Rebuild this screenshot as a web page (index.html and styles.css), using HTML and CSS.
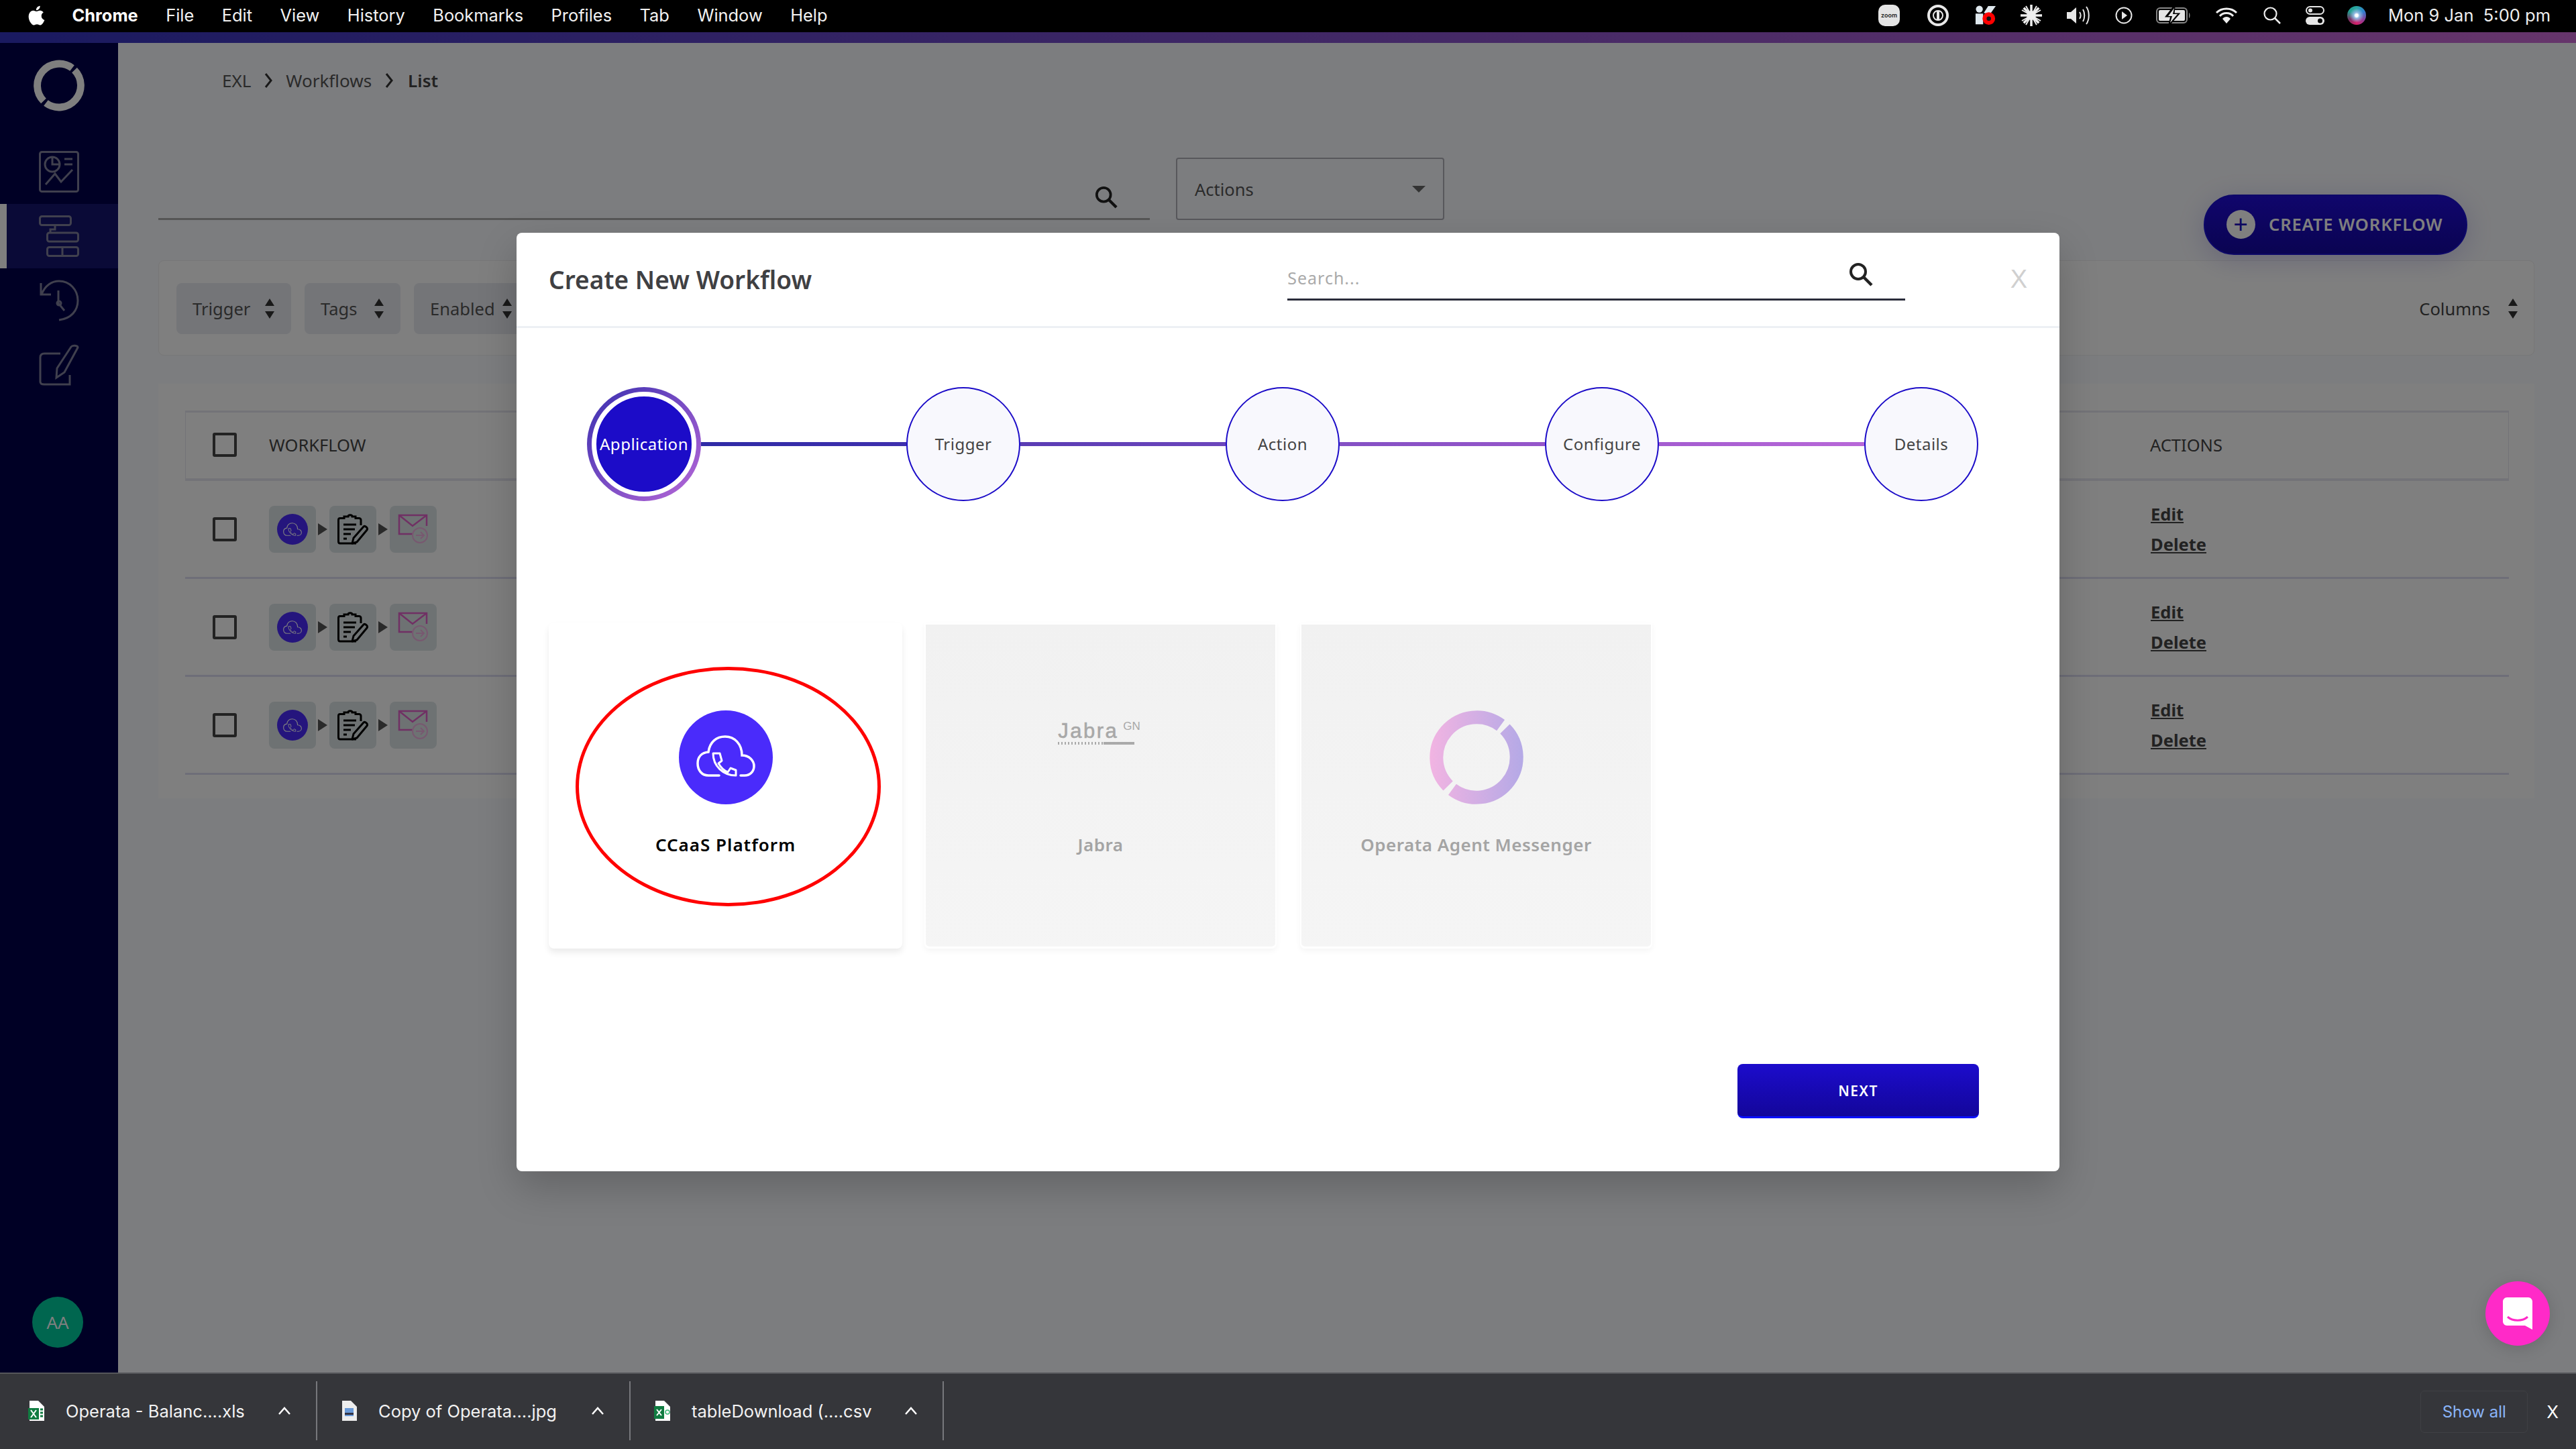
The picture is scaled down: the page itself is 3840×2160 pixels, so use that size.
FILE: index.html
```html
<!DOCTYPE html>
<html lang="en">

<head>
    <meta charset="UTF-8">
    <meta name="viewport" content="width=device-width, initial-scale=1.0">
    <title>Create New Workflow</title>
    <link rel="stylesheet" href="styles.css">
</head>

<body>
    <svg class="sprites" aria-hidden="true">
        <symbol id="icon-cloud" viewBox="0 0 88 62">
            <path d="M34 60H18C8 60 2 52 2 42C2 32 8 26 18 25C20 10 30 2 43 2C57 2 68 13 68 30C79 30 86 38 86 46C86 54 80 60 72 60H66" fill="none" stroke="currentColor" stroke-width="3.500" stroke-linecap="round" />
            <path d="M25 27H35L38 38L33 42C37 49 42 53 47 55L51 49L59 52V60C40 60 25 46 25 27Z" fill="none" stroke="currentColor" stroke-width="3" stroke-linejoin="round" />
        </symbol>
        <symbol id="icon-clip" viewBox="0 0 46 46">
            <path d="M28 44H4C2.500 44 1.500 43 1.500 41V9C1.500 7.500 2.500 6.500 4 6.500H10V4H16C16 1 22 1 22 4H27V6.500H32C34 6.500 35 8 35 9V17" fill="none" stroke="currentColor" stroke-width="3" />
            <path d="M9 16H28M9 23H26M9 30H20M9 37H14" fill="none" stroke="currentColor" stroke-width="3" />
            <path d="M22 44L24 36L39 19C41 17 46 21 44 24L29 42Z" fill="none" stroke="currentColor" stroke-width="3" stroke-linejoin="round" />
        </symbol>
        <symbol id="icon-mail" viewBox="0 0 46 46">
            <path d="M22 30H2V2H43V18" fill="none" stroke="#e060c8" stroke-width="2.500" />
            <path d="M2 2L22 18L43 2" fill="none" stroke="#e060c8" stroke-width="2.500" />
            <circle cx="33" cy="32" r="11" fill="none" stroke="#f0b0e0" stroke-width="2" />
            <path d="M27 32H39M34 27L39 32L34 37" fill="none" stroke="#f0b0e0" stroke-width="2" />
        </symbol>
        <symbol id="icon-search" viewBox="0 0 36 36">
            <circle cx="14" cy="14" r="11" fill="none" stroke="currentColor" stroke-width="4" />
            <path d="M22 22L34 34" stroke="currentColor" stroke-width="4.500" />
        </symbol>
        <symbol id="icon-sort" viewBox="0 0 16 32">
            <path d="M8 1L15 12H1Z M1 20H15L8 31Z" fill="currentColor" />
        </symbol>
        <symbol id="icon-caret" viewBox="0 0 20 12">
            <path d="M2 11L10 2L18 11" fill="none" stroke="#fff" stroke-width="2.500" />
        </symbol>
        <symbol id="icon-arrow" viewBox="0 0 14 18">
            <path d="M0 0L14 9L0 18Z" fill="#555" />
        </symbol>
    </svg>

    <header class="menubar">
        <nav class="menu-left">
            <svg class="apple" viewBox="0 0 24 28">
                <path d="M19.500 14.800C19.500 11.700 22 10.300 22.100 10.200C20.700 8.100 18.500 7.800 17.700 7.800C15.900 7.600 14.100 8.900 13.200 8.900C12.200 8.900 10.800 7.800 9.200 7.800C7.100 7.900 5.200 9 4.200 10.900C2 14.700 3.600 20.300 5.700 23.300C6.800 24.800 8 26.500 9.700 26.400C11.300 26.300 11.900 25.400 13.800 25.400C15.700 25.400 16.300 26.400 17.900 26.400C19.600 26.300 20.700 24.900 21.700 23.400C22.900 21.700 23.400 20 23.400 19.900C23.400 19.900 19.500 18.400 19.500 14.800ZM16.400 5.700C17.300 4.600 17.900 3.200 17.700 1.700C16.500 1.800 15 2.500 14.100 3.600C13.300 4.500 12.600 6 12.800 7.400C14.200 7.500 15.500 6.800 16.400 5.700Z" fill="#fff" />
            </svg>
            <strong>Chrome</strong>
            <span>File</span>
            <span>Edit</span>
            <span>View</span>
            <span>History</span>
            <span>Bookmarks</span>
            <span>Profiles</span>
            <span>Tab</span>
            <span>Window</span>
            <span>Help</span>
        </nav>
        <div class="menu-right">
            <span class="tray-zoom">zoom</span>
            <svg class="tray tray-1p" viewBox="0 0 32 32">
                <circle cx="16" cy="16" r="14" fill="none" stroke="#e8e8e8" stroke-width="4" />
                <circle cx="16" cy="16" r="7" fill="none" stroke="#e8e8e8" stroke-width="2" />
                <rect x="14" y="10" width="4" height="12" fill="#e8e8e8" />
            </svg>
            <svg class="tray" viewBox="0 0 34 32">
                <circle cx="7" cy="6" r="5.500" fill="#dfe8ee" />
                <path d="M1 13H13V30H1ZM14 12L21 1H33L24 14Z" fill="#dfe8ee" />
                <circle cx="22" cy="21" r="10" fill="#f00" />
                <circle cx="22" cy="21" r="3.500" fill="#111" />
            </svg>
            <svg class="tray" viewBox="0 0 32 32">
                <g stroke="#eee" stroke-width="3.500">
                    <path d="M16 0V32M0 16H32M4.700 4.700L27.300 27.300M27.300 4.700L4.700 27.300" />
                    <path d="M8 2L24 30M24 2L8 30M2 8L30 24M30 8L2 24" stroke-width="2" />
                </g>
                <circle cx="16" cy="16" r="7" fill="#eee" />
                <circle cx="16" cy="16" r="3" fill="#eee" />
            </svg>
            <svg class="tray tray-vol" viewBox="0 0 36 28">
                <path d="M1 9H7L15 2V26L7 19H1Z" fill="#e6e6e6" />
                <path d="M20 9C22 12 22 16 20 19M25 5C28 10 28 18 25 23M30 1C35 8 35 20 30 27" fill="none" stroke="#e6e6e6" stroke-width="2" />
            </svg>
            <svg class="tray tray-play" viewBox="0 0 26 26">
                <circle cx="13" cy="13" r="11.500" fill="none" stroke="#e6e6e6" stroke-width="2" />
                <path d="M10 7L18 13L10 19Z" fill="#e6e6e6" />
            </svg>
            <svg class="tray tray-batt" viewBox="0 0 52 26">
                <rect x="1" y="2" width="45" height="22" rx="5" fill="none" stroke="#888" stroke-width="2" />
                <rect x="4" y="5" width="39" height="16" rx="2" fill="#e6e6e6" />
                <path d="M27 0L16 14H23L20 26L33 11H26Z" fill="#000" stroke="#000" stroke-width="3" />
                <path d="M27 2L18 14H24L21 24L32 11H25Z" fill="#e6e6e6" />
                <path d="M49 9C51 10 51 16 49 17Z" fill="#888" />
            </svg>
            <svg class="tray tray-wifi" viewBox="0 0 34 26">
                <path d="M2 9C10 1 24 1 32 9M7 14C12 8 22 8 27 14" fill="none" stroke="#eee" stroke-width="3" />
                <path d="M11 18C14 14 20 14 23 18L17 25Z" fill="#eee" />
            </svg>
            <svg class="tray tray-find" viewBox="0 0 26 26">
                <circle cx="10.500" cy="10.500" r="9" fill="none" stroke="#eee" stroke-width="2.200" />
                <path d="M17 17L25 25" stroke="#eee" stroke-width="2.500" />
            </svg>
            <svg class="tray tray-ctrl" viewBox="0 0 28 28">
                <rect x="1" y="1" width="26" height="11" rx="5.500" fill="none" stroke="#e6e6e6" stroke-width="2" />
                <circle cx="7" cy="6.500" r="3" fill="#e6e6e6" />
                <rect y="16" width="28" height="12" rx="6" fill="#e6e6e6" />
                <circle cx="21.500" cy="22" r="3.500" fill="#000" />
            </svg>
            <span class="tray-siri"></span>
            <span class="clock">Mon 9 Jan&nbsp; 5:00 pm</span>
        </div>
    </header>

    <div class="app">
        <div class="brand-bar"></div>
        <div class="app-body">
            <aside class="sidebar">
                <svg class="side-logo" viewBox="0 0 140 140">
                    <path d="M27.600 112.400A60 60 0 0 1 106.100 22.100M112.400 27.600A60 60 0 0 1 33.900 117.900" fill="none" stroke="#fff" stroke-width="20" />
                </svg>
                <div class="side-item">
                    <svg viewBox="0 0 60 62">
                        <rect x="1.500" y="1.500" width="57" height="59" rx="3" />
                        <circle cx="20" cy="20" r="11" />
                        <path d="M20 9V20H31M38 12H50M38 20H50M10 50L24 34L33 46L50 28" />
                    </svg>
                </div>
                <div class="side-item side-item-active">
                    <svg viewBox="0 0 60 62">
                        <rect x="1.500" y="1.500" width="46" height="13" rx="3" />
                        <rect x="12.500" y="26" width="46" height="13" rx="3" />
                        <rect x="12.500" y="47.500" width="46" height="13" rx="3" />
                        <path d="M24 14.500V21H17V26M35 47.500V60" />
                    </svg>
                </div>
                <div class="side-item">
                    <svg viewBox="0 0 60 62">
                        <path d="M4 22C9 8 20 2 30 2C46 2 58 15 58 31C58 46 48 58 30 60M3 5V22H18M29 16V35L38 46" />
                        <circle cx="30" cy="35" r="3" />
                    </svg>
                </div>
                <div class="side-item">
                    <svg viewBox="0 0 60 62">
                        <path d="M32 14H8C4 14 2 16 2 20V56C2 59 4 60 8 60H46V46" />
                        <path d="M26 50L27 36L48 4C50 1 58 2 58 5L38 42Z" />
                    </svg>
                </div>
                <div class="avatar">AA</div>
            </aside>

            <main class="main">
                <div class="breadcrumb">
                    <span>EXL</span>
                    <svg viewBox="0 0 12 22"><path d="M2 1L10 11L2 21" /></svg>
                    <span>Workflows</span>
                    <svg viewBox="0 0 12 22"><path d="M2 1L10 11L2 21" /></svg>
                    <strong>List</strong>
                </div>

                <div class="toolbar">
                    <div class="page-search">
                        <svg class="page-search-icon"><use href="#icon-search" /></svg>
                    </div>
                    <div class="actions-select">
                        <span>Actions</span>
                        <i class="select-caret"></i>
                    </div>
                    <button class="create-btn"><span class="plus">+</span><span class="create-text">CREATE WORKFLOW</span></button>
                </div>

                <section class="filter-panel">
                    <div class="chip">Trigger <svg><use href="#icon-sort" /></svg></div>
                    <div class="chip chip-tags">Tags <svg><use href="#icon-sort" /></svg></div>
                    <div class="chip">Enabled <svg><use href="#icon-sort" /></svg></div>
                    <div class="columns-btn">Columns <svg><use href="#icon-sort" /></svg></div>
                </section>

                <section class="table-panel">
                    <div class="table-head">
                        <i class="checkbox"></i>
                        <span>WORKFLOW</span>
                        <span class="actions-col">ACTIONS</span>
                    </div>
                    <div class="table-row">
                        <i class="checkbox"></i>
                        <div class="flow">
                            <div class="flow-chip"><span class="flow-app"><svg><use href="#icon-cloud" /></svg></span></div>
                            <svg class="flow-arrow"><use href="#icon-arrow" /></svg>
                            <div class="flow-chip"><svg class="flow-glyph"><use href="#icon-clip" /></svg></div>
                            <svg class="flow-arrow"><use href="#icon-arrow" /></svg>
                            <div class="flow-chip"><svg class="flow-glyph"><use href="#icon-mail" /></svg></div>
                        </div>
                        <div class="row-links"><a>Edit</a><a>Delete</a></div>
                    </div>
                    <div class="table-row">
                        <i class="checkbox"></i>
                        <div class="flow">
                            <div class="flow-chip"><span class="flow-app"><svg><use href="#icon-cloud" /></svg></span></div>
                            <svg class="flow-arrow"><use href="#icon-arrow" /></svg>
                            <div class="flow-chip"><svg class="flow-glyph"><use href="#icon-clip" /></svg></div>
                            <svg class="flow-arrow"><use href="#icon-arrow" /></svg>
                            <div class="flow-chip"><svg class="flow-glyph"><use href="#icon-mail" /></svg></div>
                        </div>
                        <div class="row-links"><a>Edit</a><a>Delete</a></div>
                    </div>
                    <div class="table-row">
                        <i class="checkbox"></i>
                        <div class="flow">
                            <div class="flow-chip"><span class="flow-app"><svg><use href="#icon-cloud" /></svg></span></div>
                            <svg class="flow-arrow"><use href="#icon-arrow" /></svg>
                            <div class="flow-chip"><svg class="flow-glyph"><use href="#icon-clip" /></svg></div>
                            <svg class="flow-arrow"><use href="#icon-arrow" /></svg>
                            <div class="flow-chip"><svg class="flow-glyph"><use href="#icon-mail" /></svg></div>
                        </div>
                        <div class="row-links"><a>Edit</a><a>Delete</a></div>
                    </div>
                </section>
            </main>
        </div>

        <div class="overlay"></div>

        <div class="chat-fab">
            <svg viewBox="0 0 44 48">
                <path d="M6 0H38C41 0 44 3 44 6V48L33 42H6C3 42 0 39 0 36V6C0 3 3 0 6 0Z" fill="#fff" />
                <path d="M7 29C15 36 29 36 37 29" fill="none" stroke="#ff2ac8" stroke-width="3" />
            </svg>
        </div>

        <!-- modal -->
        <section class="modal">
            <div class="modal-header">
                <h2>Create New Workflow</h2>
                <div class="modal-search">
                    <span>Search...</span>
                    <svg><use href="#icon-search" /></svg>
                </div>
                <span class="modal-close">X</span>
            </div>

            <div class="stepper">
                <div class="step step-active"><span>Application</span></div>
                <div class="step-line step-line-1"></div>
                <div class="step"><span>Trigger</span></div>
                <div class="step-line step-line-2"></div>
                <div class="step"><span>Action</span></div>
                <div class="step-line step-line-3"></div>
                <div class="step"><span>Configure</span></div>
                <div class="step-line step-line-4"></div>
                <div class="step"><span>Details</span></div>
            </div>

            <div class="cards">
                <div class="card card-main">
                    <span class="card-icon"><svg><use href="#icon-cloud" /></svg></span>
                    <div class="card-label">CCaaS Platform</div>
                    <div class="red-mark"></div>
                </div>
                <div class="card card-off">
                    <div class="jabra-logo">
                        <div class="jabra-word">Jabra<sup>GN</sup></div>
                        <div class="jabra-bar"></div>
                    </div>
                    <div class="card-label">Jabra</div>
                </div>
                <div class="card card-off">
                    <svg class="ring-logo" viewBox="0 0 140 140">
                        <defs>
                            <linearGradient id="ringGrad" gradientUnits="userSpaceOnUse" x1="0" y1="0" x2="140" y2="0">
                                <stop offset="0" stop-color="#f2b4e2" />
                                <stop offset="1" stop-color="#b4a9e6" />
                            </linearGradient>
                        </defs>
                        <path d="M27.600 112.400A60 60 0 0 1 106.100 22.100M112.400 27.600A60 60 0 0 1 33.900 117.900" fill="none" stroke="url(#ringGrad)" stroke-width="20" />
                    </svg>
                    <div class="card-label">Operata Agent Messenger</div>
                </div>
            </div>

            <div class="modal-footer">
                <button class="next-btn">NEXT</button>
            </div>
        </section>
    </div>

    <footer class="downloads">
        <div class="dl-item dl-first">
            <svg class="dl-file" viewBox="0 0 24 30">
                <path d="M2 0H15L24 9V30H2Z" fill="#fff" />
                <rect y="11" width="16" height="17" fill="#107c41" />
                <path d="M4 14L12 25M12 14L4 25" stroke="#fff" stroke-width="2" />
                <path d="M18 13H22M18 18H22M18 23H22" stroke="#107c41" stroke-width="3" />
            </svg>
            <span>Operata - Balanc....xls</span>
            <svg class="dl-caret"><use href="#icon-caret" /></svg>
        </div>
        <div class="dl-item">
            <svg class="dl-file" viewBox="0 0 24 30">
                <path d="M2 0H15L24 9V30H2Z" fill="#eee" />
                <rect x="6" y="11" width="13" height="12" fill="#6a9ad8" />
                <rect x="6" y="18" width="13" height="3" fill="#334" />
            </svg>
            <span>Copy of Operata....jpg</span>
            <svg class="dl-caret"><use href="#icon-caret" /></svg>
        </div>
        <div class="dl-item">
            <svg class="dl-file" viewBox="0 0 24 30">
                <path d="M2 0H15L24 9V30H2Z" fill="#fff" />
                <rect y="8" width="15" height="19" fill="#107c41" />
                <path d="M4 13L11 22M11 13L4 22" stroke="#fff" stroke-width="2" />
                <circle cx="20" cy="17" r="3" fill="none" stroke="#3cb878" stroke-width="1.500" />
            </svg>
            <span>tableDownload (....csv</span>
            <svg class="dl-caret"><use href="#icon-caret" /></svg>
        </div>
        <div class="dl-end">
            <span class="show-all">Show all</span>
            <span class="dl-close">X</span>
        </div>
    </footer>
</body>

</html>
```

FILE: styles.css
```css
* {
    box-sizing: border-box;
}

body {
    margin: 0;
    width: 3840px;
    height: 2160px;
    overflow: hidden;
    display: flex;
    flex-direction: column;
    font-family: "Noto Sans", "Open Sans", sans-serif;
    background: #000;
}

.sprites {
    display: none;
}

/* mac menu bar */
.menubar {
    height: 48px;
    flex: none;
    background: #000;
    color: #f2f2f2;
    display: flex;
    justify-content: space-between;
    align-items: center;
    font-family: Inter, "Liberation Sans", sans-serif;
    font-size: 25.400px;
    padding-bottom: 3px;
}

.menu-left {
    display: flex;
    align-items: center;
    gap: 41.500px;
    padding-left: 39px;
}

.menu-left strong {
    font-weight: 700;
    color: #fff;
}

.apple {
    width: 28px;
    height: 34px;
    margin-right: -1px;
}

.menu-right {
    display: flex;
    align-items: center;
    padding-right: 38px;
}

.tray {
    width: 32px;
    height: 32px;
    margin-right: 36px;
    flex: none;
}

.tray-1p {
    margin-right: 39px;
}

.tray-zoom {
    width: 32px;
    height: 32px;
    margin-right: 41px;
    border-radius: 10px;
    background: #e4e4e4;
    color: #222;
    font-size: 9px;
    font-weight: 600;
    display: flex;
    align-items: center;
    justify-content: center;
}

.tray-vol {
    width: 36px;
    height: 28px;
}

.tray-play {
    width: 26px;
    height: 26px;
    margin-right: 35px;
    margin-left: 1px;
}

.tray-batt {
    width: 52px;
    height: 26px;
}

.tray-wifi {
    width: 34px;
    height: 26px;
    margin-right: 38px;
}

.tray-find {
    width: 26px;
    height: 26px;
    margin-right: 37px;
}

.tray-ctrl {
    width: 28px;
    height: 28px;
    margin-right: 34px;
}

.tray-siri {
    width: 28px;
    height: 28px;
    margin-right: 33px;
    border-radius: 50%;
    background: radial-gradient(circle at 50% 50%, #fff 0 10%, #8fb8e0 22%, transparent 55%), conic-gradient(#2aa7a0, #2f7fd0, #8a3f9a, #d81f6a, #7a2f60, #1f9f90, #2aa7a0);
}

.clock {
    white-space: nowrap;
    color: #eee;
    font-size: 25.500px;
}

/* browser content */
.app {
    position: relative;
    flex: 1;
    display: flex;
    flex-direction: column;
    background: #f9fafe;
}

.brand-bar {
    height: 16px;
    flex: none;
    background: linear-gradient(90deg, #3434c0, #cc6ad6);
}

.app-body {
    flex: 1;
    display: flex;
}

.sidebar {
    width: 176px;
    flex: none;
    background: #00004a;
    display: flex;
    flex-direction: column;
    align-items: center;
}

.side-logo {
    width: 76px;
    height: 77px;
    margin: 25px 0 42px;
}

.side-item {
    width: 100%;
    height: 96px;
    display: flex;
    align-items: center;
    justify-content: center;
}

.side-item svg {
    width: 60px;
    height: 62px;
    fill: none;
    stroke: #80809c;
    stroke-width: 3;
}

.side-item-active {
    background: #14146e;
    border-left: 10px solid #fff;
    padding-right: 10px;
}

.avatar {
    width: 76px;
    height: 76px;
    margin-top: auto;
    margin-bottom: 37px;
    margin-right: 4px;
    border-radius: 50%;
    background: #00cc9f;
    color: #fff;
    font-size: 26px;
    display: flex;
    align-items: center;
    justify-content: center;
}

.main {
    flex: 1;
    padding: 0 62px 0 60px;
    color: #444;
    font-size: 25.500px;
}

.breadcrumb {
    height: 112px;
    padding-left: 95px;
    display: flex;
    align-items: center;
    gap: 20px;
    color: #555;
    font-size: 26px;
}

.breadcrumb svg {
    width: 12px;
    height: 22px;
    fill: none;
    stroke: #333;
    stroke-width: 3;
}

.breadcrumb strong {
    font-weight: 600;
    color: #444;
    margin-left: 2px;
}

.toolbar {
    height: 145px;
    margin-top: 59px;
    display: flex;
    align-items: flex-start;
}

.page-search {
    width: 1478px;
    height: 93px;
    border-bottom: 3px solid #aaa;
    position: relative;
}

.page-search-icon {
    position: absolute;
    right: 48px;
    top: 42px;
    width: 34px;
    height: 34px;
    color: #222;
}

.actions-select {
    width: 400px;
    height: 93px;
    margin-left: 39px;
    padding: 0 26px;
    border: 2px solid #b0b0b8;
    border-radius: 4px;
    display: flex;
    align-items: center;
    justify-content: space-between;
    color: #555;
}

.select-caret {
    border-left: 10px solid transparent;
    border-right: 10px solid transparent;
    border-top: 10px solid #666;
}

.create-btn {
    width: 393px;
    height: 90px;
    margin: 55px 100px 0 auto;
    padding: 0 0 2px 32px;
    border: 2px solid #1a10d0;
    border-radius: 45px;
    background: linear-gradient(180deg, #200cd8, #1408a4);
    box-shadow: 0 8px 40px rgba(20, 8, 164, .18);
    color: #fff;
    font: 600 25.500px "Noto Sans", sans-serif;
    letter-spacing: .9px;
    display: flex;
    align-items: center;
    gap: 20px;
}

.plus {
    width: 43px;
    height: 43px;
    border-radius: 50%;
    background: #fff;
    color: #1a10c0;
    font-size: 38px;
    font-weight: 400;
    line-height: 41px;
    text-align: center;
}

.filter-panel {
    height: 142px;
    margin-top: 8px;
    padding: 33px 23px 0 26px;
    background: #fff;
    border: 1px solid #eee;
    border-radius: 8px;
    display: flex;
    gap: 20px;
}

.chip {
    width: 171px;
    height: 76px;
    padding: 0 24px;
    border-radius: 8px;
    background: #e8eaf0;
    display: flex;
    align-items: center;
    justify-content: space-between;
    color: #555;
}

.chip svg,
.columns-btn svg {
    width: 16px;
    height: 32px;
    color: #333;
}

.chip-tags {
    width: 143px;
}

.columns-btn {
    margin-left: auto;
    height: 76px;
    display: flex;
    align-items: center;
    gap: 26px;
    color: #444;
}

.table-panel {
    height: 618px;
    margin-top: 42px;
    padding: 40px 38px 0 40px;
    background: #fff;
}

.table-head {
    height: 105px;
    border: 1px solid #e6e6f0;
    border-top-width: 3px;
    border-bottom-width: 4px;
    padding: 0 0 2px 40px;
    display: flex;
    align-items: center;
    color: #444;
    font-size: 25.500px;
}

.checkbox {
    width: 36px;
    height: 36px;
    flex: none;
    margin-right: 48px;
    border: 4px solid #444;
    border-radius: 3px;
}

.actions-col {
    margin-left: auto;
    margin-right: 426px;
}

.table-row {
    height: 146px;
    border-bottom: 3px solid #dcdcf0;
    padding-left: 41px;
    display: flex;
    align-items: center;
}

.flow {
    display: flex;
    align-items: center;
    gap: 3px;
}

.flow-chip {
    width: 70px;
    height: 70px;
    border-radius: 8px;
    background: #dce4e6;
    display: flex;
    align-items: center;
    justify-content: center;
}

.flow-app {
    width: 46px;
    height: 46px;
    border-radius: 50%;
    background: #4a2bfb;
    color: #fff;
    display: flex;
    align-items: center;
    justify-content: center;
}

.flow-app svg {
    width: 28px;
    height: 20px;
}

.flow-glyph {
    width: 46px;
    height: 46px;
    color: #000;
}

.flow-arrow {
    width: 14px;
    height: 18px;
}

.row-links {
    margin-left: auto;
    margin-right: 434px;
    width: 100px;
    display: flex;
    flex-direction: column;
    gap: 13px;
    font-size: 25.500px;
    font-weight: 700;
    line-height: 32px;
}

.row-links a {
    text-decoration: underline;
    color: #444;
}

/* everything behind the dialog gets dimmed */
.overlay {
    position: absolute;
    inset: 0;
    background: rgba(0, 0, 0, .5);
}

.chat-fab {
    position: absolute;
    left: 3705px;
    top: 1862px;
    width: 96px;
    height: 96px;
    border-radius: 50%;
    background: #ff2ac8;
    box-shadow: 0 4px 24px rgba(0, 0, 0, .15);
    display: flex;
    align-items: center;
    justify-content: center;
}

.chat-fab svg {
    width: 44px;
    height: 48px;
}

.modal {
    position: absolute;
    left: 770px;
    top: 299px;
    width: 2300px;
    height: 1399px;
    background: #fff;
    border-radius: 8px;
    box-shadow: 0 24px 60px rgba(0, 0, 0, .2);
    color: #444;
}

.modal-header {
    height: 142px;
    padding: 0 48px;
    border-bottom: 3px solid #edf0f4;
    display: flex;
    align-items: center;
}

.modal-header h2 {
    margin: 0;
    width: 1102px;
    font-size: 37px;
    font-weight: 600;
    color: #3f4043;
    letter-spacing: .05px;
}

.modal-search {
    width: 921px;
    height: 101px;
    align-self: flex-start;
    padding: 36px 48px 0 0;
    border-bottom: 3px solid #2b2d3b;
    display: flex;
    align-items: center;
    justify-content: space-between;
    color: #aaa;
    font-size: 25px;
    letter-spacing: 1px;
}

.modal-search svg {
    width: 36px;
    height: 36px;
    color: #222;
    margin-top: -10px;
}

.modal-close {
    margin-left: 157px;
    color: #d0d0d0;
    font-size: 38px;
    font-weight: 300;
    font-family: "Liberation Sans", sans-serif;
}

.stepper {
    margin: 88px 121px 0 105px;
    display: flex;
    align-items: center;
}

.step {
    width: 170px;
    height: 170px;
    flex: none;
    border: 2px solid #1c0cc8;
    border-radius: 50%;
    background: #f8f8fd;
    display: flex;
    align-items: center;
    justify-content: center;
    font-size: 24px;
    letter-spacing: .5px;
    color: #444;
}

.step span {
    margin-top: -2px;
}

.step-active {
    border: 0;
    background: linear-gradient(135deg, #3a30b0, #b868d8);
    position: relative;
    color: #fff;
}

.step-active span {
    position: relative;
}

/* white gap + filled disc inside the gradient ring */
.step-active::before {
    content: "";
    position: absolute;
    inset: 7px;
    border-radius: 50%;
    background: #1c0cc8;
    border: 7px solid #fff;
}

.step-line {
    flex: 1;
    height: 6px;
}

.step-line-1 {
    background: linear-gradient(90deg, #2f2ba6, #3f30ae);
}

.step-line-2 {
    background: linear-gradient(90deg, #5a3cb4, #6c46bc);
}

.step-line-3 {
    background: linear-gradient(90deg, #8450c4, #9656ca);
}

.step-line-4 {
    background: linear-gradient(90deg, #a45cd0, #b868d8);
}

.cards {
    margin: 181px 0 0 48px;
    display: flex;
    gap: 35px;
}

.card {
    position: relative;
    width: 525px;
    height: 486px;
    padding-top: 131px;
    border-radius: 8px;
    background: #fff;
    box-shadow: 0 6px 10px rgba(0, 0, 0, .08);
    display: flex;
    flex-direction: column;
    align-items: center;
    font-size: 26px;
}

.card-main {
    width: 527px;
    margin-right: -2px;
}

.card-off {
    padding-top: 128px;
    background: linear-gradient(180deg, #f1f1f1, #f5f5f5);
    border: 2px solid #fff;
    border-top-width: 3px;
    border-bottom-width: 3px;
    border-radius: 0 0 8px 8px;
    box-shadow: 0 4px 8px rgba(0, 0, 0, .04);
}

.card-icon {
    width: 140px;
    height: 140px;
    border-radius: 50%;
    background: #4a2bfb;
    color: #fff;
    display: flex;
    align-items: center;
    justify-content: center;
}

.card-icon svg {
    width: 88px;
    height: 62px;
    margin-top: -4px;
}

.card-label {
    position: absolute;
    left: 0;
    right: 0;
    top: 312px;
    text-align: center;
    line-height: 38px;
    font-weight: 600;
    color: #000;
    letter-spacing: 1px;
}

.card-off .card-label {
    top: 309px;
    color: #a4a4a4;
    letter-spacing: .5px;
}

.red-mark {
    position: absolute;
    left: 40px;
    top: 66px;
    width: 455px;
    height: 357px;
    border: 5px solid #f00;
    border-radius: 50%;
}

.jabra-logo {
    height: 140px;
    margin-top: 16px;
    margin-right: 4px;
    color: #a8a8a8;
}

.jabra-word {
    font-size: 31px;
    font-weight: 400;
    letter-spacing: 2.500px;
    line-height: 30px;
    font-family: "Liberation Sans", sans-serif;
    -webkit-text-stroke: .6px #a8a8a8;
}

.jabra-word sup {
    font-size: 17px;
    font-weight: 400;
    letter-spacing: 0;
    line-height: 0;
    margin-left: 7px;
    vertical-align: 12px;
    -webkit-text-stroke: 0;
}

.jabra-bar {
    width: 114px;
    height: 4px;
    margin-top: 1px;
    background: linear-gradient(90deg, transparent 60%, #aaa 60%), repeating-linear-gradient(90deg, #aaa 0 2px, transparent 2px 5px);
}

.ring-logo {
    width: 140px;
    height: 140px;
}

.modal-footer {
    margin-top: 172px;
    padding-right: 120px;
    display: flex;
    justify-content: flex-end;
}

.next-btn {
    width: 360px;
    height: 81px;
    border: 0;
    border-bottom: 3px solid #0a10ff;
    border-radius: 8px;
    background: linear-gradient(180deg, #1c0ccc, #13069a);
    color: #fff;
    font: 600 21px "Noto Sans", sans-serif;
    letter-spacing: 1.500px;
    padding-top: 2px;
}

/* chrome download shelf */
.downloads {
    height: 114px;
    flex: none;
    background: #35363a;
    border-top: 2px solid #55565a;
    display: flex;
    align-items: center;
    color: #f2f2f2;
    font: 25.500px Inter, "Liberation Sans", sans-serif;
}

.dl-item {
    width: 467px;
    height: 88px;
    padding-left: 35px;
    flex: none;
    display: flex;
    align-items: center;
    border-right: 2px solid #77787c;
    margin-top: -2px;
}

.dl-first {
    width: 473px;
    padding-left: 42px;
}

.dl-file {
    width: 24px;
    height: 30px;
    flex: none;
    margin-right: 32px;
}

.dl-item span {
    white-space: nowrap;
}

.dl-caret {
    width: 20px;
    height: 12px;
    margin-left: auto;
    margin-right: 37px;
    flex: none;
}

.dl-end {
    margin-left: auto;
    display: flex;
    align-items: center;
    padding-right: 26px;
}

.show-all {
    width: 160px;
    height: 63px;
    margin-right: 2px;
    border: 1px solid #3f4044;
    border-radius: 6px;
    display: flex;
    align-items: center;
    justify-content: center;
    color: #8ab4f8;
    font-size: 24px;
}

.dl-close {
    margin-left: 26px;
    font-size: 26px;
    color: #fff;
}
```
